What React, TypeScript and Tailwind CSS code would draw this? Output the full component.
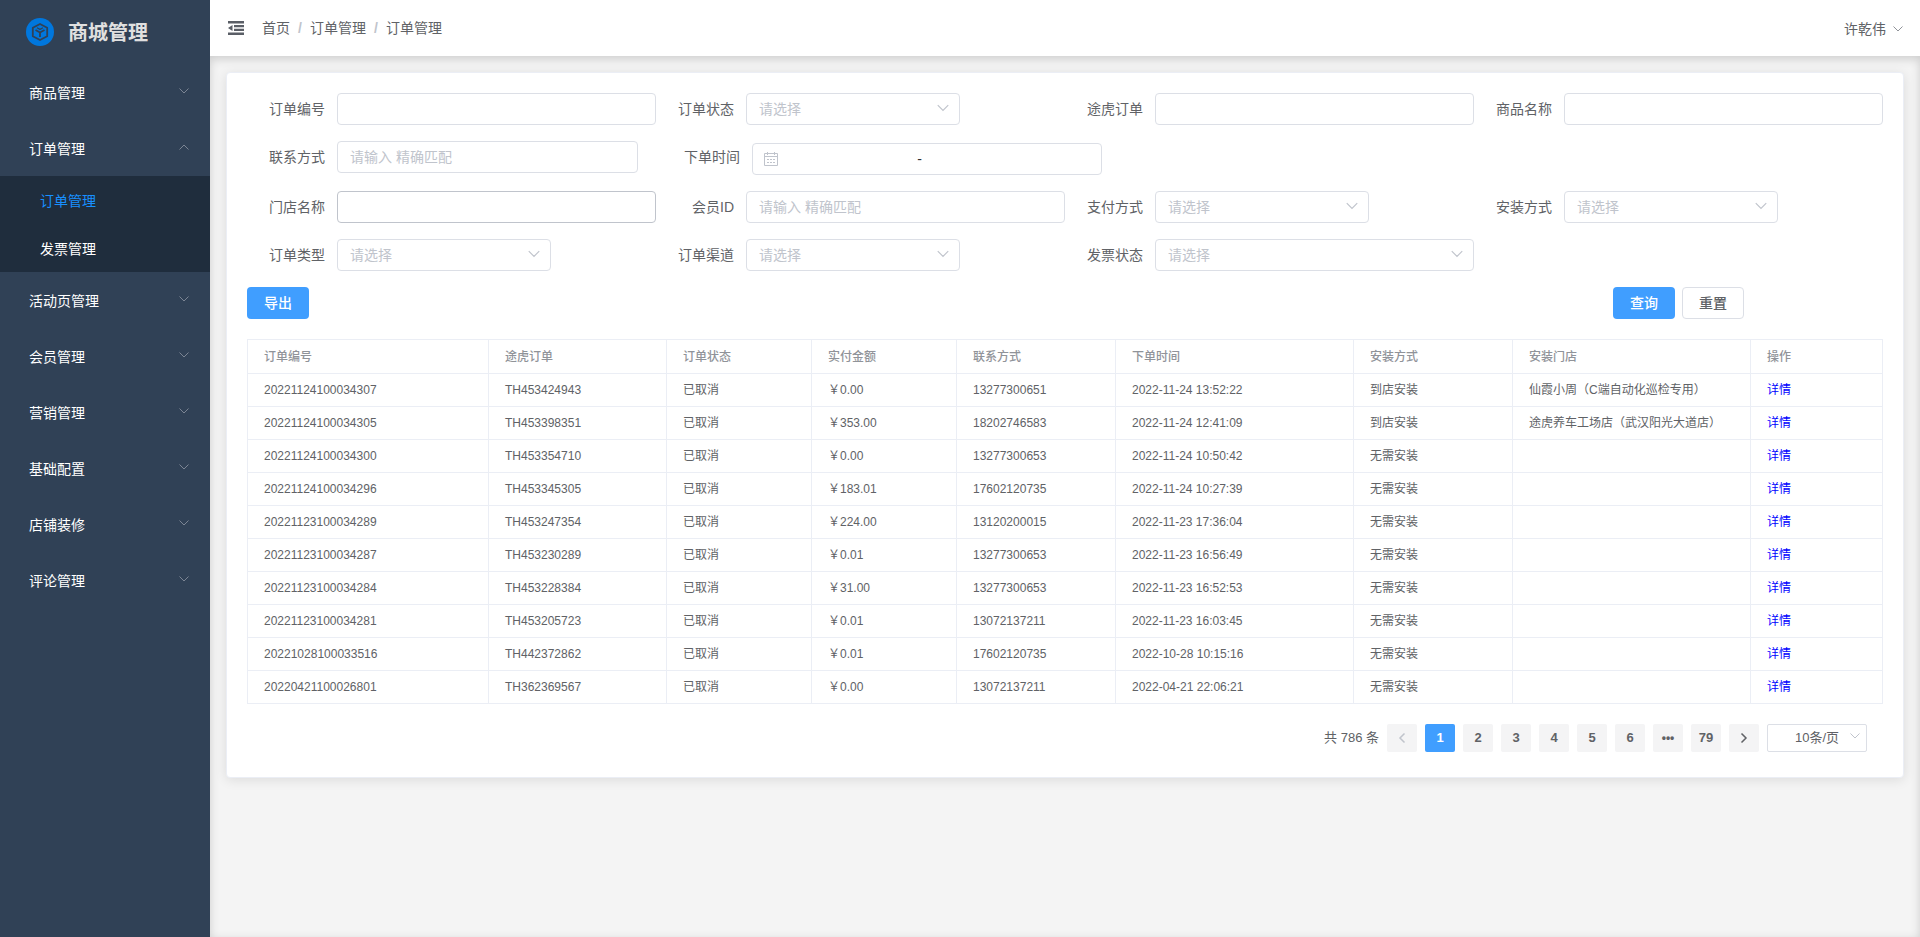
import type { ReactNode } from "react";

const MENU = [
  { title: "商品管理" },
  { title: "订单管理", children: ["订单管理", "发票管理"] },
  { title: "活动页管理" },
  { title: "会员管理" },
  { title: "营销管理" },
  { title: "基础配置" },
  { title: "店铺装修" },
  { title: "评论管理" },
];

const COLUMNS = [
  { title: "订单编号", width: "w-[241px]" },
  { title: "途虎订单", width: "w-[178px]" },
  { title: "订单状态", width: "w-[145px]" },
  { title: "实付金额", width: "w-[145px]" },
  { title: "联系方式", width: "w-[159px]" },
  { title: "下单时间", width: "w-[238px]" },
  { title: "安装方式", width: "w-[159px]" },
  { title: "安装门店", width: "w-[238px]" },
  { title: "操作", width: "w-[132px]" },
];

const ORDERS = [
  ["20221124100034307", "TH453424943", "已取消", "￥0.00", "13277300651", "2022-11-24 13:52:22", "到店安装", "仙霞小周（C端自动化巡检专用）"],
  ["20221124100034305", "TH453398351", "已取消", "￥353.00", "18202746583", "2022-11-24 12:41:09", "到店安装", "途虎养车工场店（武汉阳光大道店）"],
  ["20221124100034300", "TH453354710", "已取消", "￥0.00", "13277300653", "2022-11-24 10:50:42", "无需安装", ""],
  ["20221124100034296", "TH453345305", "已取消", "￥183.01", "17602120735", "2022-11-24 10:27:39", "无需安装", ""],
  ["20221123100034289", "TH453247354", "已取消", "￥224.00", "13120200015", "2022-11-23 17:36:04", "无需安装", ""],
  ["20221123100034287", "TH453230289", "已取消", "￥0.01", "13277300653", "2022-11-23 16:56:49", "无需安装", ""],
  ["20221123100034284", "TH453228384", "已取消", "￥31.00", "13277300653", "2022-11-23 16:52:53", "无需安装", ""],
  ["20221123100034281", "TH453205723", "已取消", "￥0.01", "13072137211", "2022-11-23 16:03:45", "无需安装", ""],
  ["20221028100033516", "TH442372862", "已取消", "￥0.01", "17602120735", "2022-10-28 10:15:16", "无需安装", ""],
  ["20220421100026801", "TH362369567", "已取消", "￥0.00", "13072137211", "2022-04-21 22:06:21", "无需安装", ""],
];

const PAGES = ["1", "2", "3", "4", "5", "6", "•••", "79"];

function Chevron({ className, up }: { className: string; up?: boolean }) {
  return (
    <svg viewBox="0 0 12 12" fill="none" stroke="currentColor" className={className} aria-hidden="true">
      <path d={up ? "M1.5 8.5 6 4l4.5 4.5" : "M1.5 3.5 6 8l4.5-4.5"} />
    </svg>
  );
}

function Logo() {
  return (
    <svg viewBox="0 0 28 28" className="size-7" aria-hidden="true">
      <circle cx="14" cy="14" r="14" fill="#0077de" />
      <g fill="none" stroke="#304156" strokeWidth="1.8" strokeLinejoin="round">
        <path d="M14 6 6.800 9.800v8.400L14 22l7.200-3.800V9.800z" />
        <path d="m9.500 12 4.500 2.500 4.500-2.500M14 14.500v4.500" />
        <path d="m11 9.800 3 1.600 3-1.600" strokeWidth="1.2" />
      </g>
    </svg>
  );
}

function FoldIcon() {
  return (
    <svg viewBox="0 0 16 14" className="h-3.5 w-4" fill="#5a5e66" aria-hidden="true">
      <path d="M0 0h16v2.500H0zM6 4h10v2.200H6zM6 7.800h10V10H6zM0 11.500h16V14H0zM0 7l4.500-3v6z" />
    </svg>
  );
}

function CalendarIcon() {
  return (
    <svg viewBox="0 0 14 14" className="size-3.5 shrink-0" fill="none" stroke="#c0c4cc" aria-hidden="true">
      <path d="M.5 1.5h13v12H.5zM.5 4.500h13M3.500 0v3M10.500 0v3" />
      <path d="M3 7.500h8.500M3 10.500h8.500" strokeDasharray="2 1" />
    </svg>
  );
}

function Field({ id, label, className = "w-1/4", children }: { id: string; label: string; className?: string; children: ReactNode }) {
  return (
    <div className={`flex items-center ${className}`}>
      <label htmlFor={id} className="w-[90px] shrink-0 pr-3 text-right text-sm leading-8 text-[#606266]">
        {label}
      </label>
      {children}
    </div>
  );
}

function TextInput({ id, placeholder, border = "border-[#dcdfe6]" }: { id: string; placeholder?: string; border?: string }) {
  return (
    <input
      id={id}
      type="text"
      placeholder={placeholder}
      className={`h-8 w-full min-w-0 flex-1 rounded border bg-white px-3 text-sm text-[#606266] outline-none placeholder:text-[#c0c4cc] ${border}`}
    />
  );
}

function SelectInput({ id, className = "w-[214px]" }: { id: string; className?: string }) {
  return (
    <div className={`relative ${className}`}>
      <select id={id} className="h-8 w-full appearance-none rounded border border-[#dcdfe6] bg-white px-3 text-sm text-[#c0c4cc] outline-none">
        <option>请选择</option>
      </select>
      <Chevron className="pointer-events-none absolute top-2 right-2.5 size-3.5 text-[#c0c4cc]" />
    </div>
  );
}

function Sidebar() {
  return (
    <aside className="w-[210px] shrink-0 bg-[#304156]">
      <div className="flex h-16 items-start gap-3.5 pt-[18px] pl-[26px]">
        <Logo />
        <h1 className="text-xl leading-[30px] font-bold text-[#e0e0e0]">商城管理</h1>
      </div>
      <nav className="text-sm text-white">
        {MENU.map((item) => (
          <div key={item.title}>
            <button className="flex h-14 w-full items-center justify-between pr-5 pl-[29px]">
              <span className="pt-0.5">{item.title}</span>
              <Chevron up={!!item.children} className="mb-0.5 size-3 text-[#7c8594]" />
            </button>
            {item.children && (
              <ul className="bg-[#1f2d3d]">
                {item.children.map((child, i) => (
                  <li key={child}>
                    <a href="#" className={`flex h-12 items-center pt-0.5 pl-10 ${i === 0 ? "text-[#1890ff]" : ""}`}>
                      {child}
                    </a>
                  </li>
                ))}
              </ul>
            )}
          </div>
        ))}
      </nav>
    </aside>
  );
}

function Header() {
  return (
    <header className="flex h-14 items-center justify-between bg-white pr-4 pl-[18px] text-sm text-[#606266]">
      <div className="flex items-center">
        <button aria-label="折叠菜单">
          <FoldIcon />
        </button>
        <nav className="flex pl-[18px]">
          <a href="#">首页</a>
          <span className="w-5 text-center font-bold text-[#c0c4cc]">/</span>
          <a href="#">订单管理</a>
          <span className="w-5 text-center font-bold text-[#c0c4cc]">/</span>
          <span>订单管理</span>
        </nav>
      </div>
      <button className="flex items-center gap-1.5 pt-0.5">
        许乾伟
        <Chevron className="size-3 text-[#909399]" />
      </button>
    </header>
  );
}

function SearchForm() {
  return (
    <form className="text-sm">
      <div className="mb-4 flex">
        <Field id="orderNo" label="订单编号"><TextInput id="orderNo" /></Field>
        <Field id="status" label="订单状态"><SelectInput id="status" /></Field>
        <Field id="tuhuNo" label="途虎订单"><TextInput id="tuhuNo" /></Field>
        <Field id="goods" label="商品名称"><TextInput id="goods" /></Field>
      </div>
      <div className="mb-4 flex items-start gap-6">
        <Field id="phone" label="联系方式" className="w-[391px]"><TextInput id="phone" placeholder="请输入 精确匹配" /></Field>
        <div className="flex items-start">
          <label htmlFor="startTime" className="w-[90px] shrink-0 pr-3 text-right leading-8 text-[#606266]">下单时间</label>
          <div className="mt-0.5 flex h-8 w-[350px] items-center rounded border border-[#dcdfe6] pr-10 pl-[11px] text-[#303133]">
            <CalendarIcon />
            <input id="startTime" type="text" className="min-w-0 flex-1 outline-none" />
            <span>-</span>
            <input aria-label="结束时间" type="text" className="min-w-0 flex-1 outline-none" />
          </div>
        </div>
      </div>
      <div className="mb-4 flex">
        <Field id="store" label="门店名称"><TextInput id="store" border="border-[#c0c4cc]" /></Field>
        <Field id="memberId" label="会员ID"><TextInput id="memberId" placeholder="请输入 精确匹配" /></Field>
        <Field id="payType" label="支付方式"><SelectInput id="payType" /></Field>
        <Field id="install" label="安装方式"><SelectInput id="install" /></Field>
      </div>
      <div className="mb-4 flex">
        <Field id="orderType" label="订单类型"><SelectInput id="orderType" /></Field>
        <Field id="channel" label="订单渠道"><SelectInput id="channel" /></Field>
        <Field id="invoice" label="发票状态"><SelectInput id="invoice" className="w-full" /></Field>
      </div>
      <div className="flex justify-between pr-[139px]">
        <button type="button" className="h-8 rounded bg-[#409eff] px-[17px] font-medium text-white">导出</button>
        <div className="flex gap-[7px]">
          <button type="submit" className="h-8 rounded bg-[#409eff] px-[17px] font-medium text-white">查询</button>
          <button type="reset" className="h-8 rounded border border-[#dcdfe6] bg-white px-4 font-medium text-[#606266]">重置</button>
        </div>
      </div>
    </form>
  );
}

function OrderTable() {
  return (
    <table className="mt-5 w-full table-fixed border-collapse text-left text-xs text-[#606266]">
      <thead>
        <tr className="h-[34px]">
          {COLUMNS.map((c) => (
            <th key={c.title} className={`border border-[#ebeef5] px-4 font-medium text-[#909399] ${c.width}`}>
              {c.title}
            </th>
          ))}
        </tr>
      </thead>
      <tbody>
        {ORDERS.map((row) => (
          <tr key={row[0]} className="h-[33px]">
            {row.map((text, i) => (
              <td key={i} className="border border-[#ebeef5] px-4 whitespace-nowrap">{text}</td>
            ))}
            <td className="border border-[#ebeef5] px-4">
              <a href="#" className="text-[#0000ff]">详情</a>
            </td>
          </tr>
        ))}
      </tbody>
    </table>
  );
}

function Pagination() {
  return (
    <div className="mt-5 flex items-center justify-end gap-2 pr-4 text-[13px] text-[#606266]">
      <span>共 786 条</span>
      <button disabled aria-label="上一页" className="flex h-7 w-[30px] items-center justify-center rounded-xs bg-[#f4f4f5] text-[#c0c4cc]">
        <Chevron className="size-3 rotate-90 stroke-[1.5]" />
      </button>
      {PAGES.map((p) => (
        <button
          key={p}
          className={`h-7 w-[30px] rounded-xs font-bold ${p === "1" ? "bg-[#409eff] text-white" : "bg-[#f4f4f5]"} ${p === "•••" ? "text-xs" : ""}`}
        >
          {p}
        </button>
      ))}
      <button aria-label="下一页" className="flex h-7 w-[30px] items-center justify-center rounded-xs bg-[#f4f4f5]">
        <Chevron className="size-3 -rotate-90 stroke-[1.5]" />
      </button>
      <div className="relative w-[100px]">
        <select aria-label="每页条数" className="h-7 w-full appearance-none rounded-xs border border-[#dcdfe6] bg-white pr-6 pl-[27px] outline-none">
          <option>10条/页</option>
        </select>
        <Chevron className="pointer-events-none absolute top-1.5 right-1.5 size-3 text-[#c0c4cc]" />
      </div>
    </div>
  );
}

export default function App() {
  return (
    <div className="flex min-h-screen font-['Liberation_Sans','Noto_Sans_CJK_SC',sans-serif]">
      <Sidebar />
      <div className="flex min-w-0 flex-1 flex-col">
        <Header />
        <main className="flex-1 bg-[#f4f4f4] p-4 shadow-[inset_0_3px_10px_rgba(0,0,0,0.16)]">
          <section className="rounded border border-[#ebeef5] bg-white px-5 pt-5 pb-[25px] shadow-[0_2px_12px_rgba(0,0,0,0.1)]">
            <SearchForm />
            <OrderTable />
            <Pagination />
          </section>
        </main>
      </div>
    </div>
  );
}
